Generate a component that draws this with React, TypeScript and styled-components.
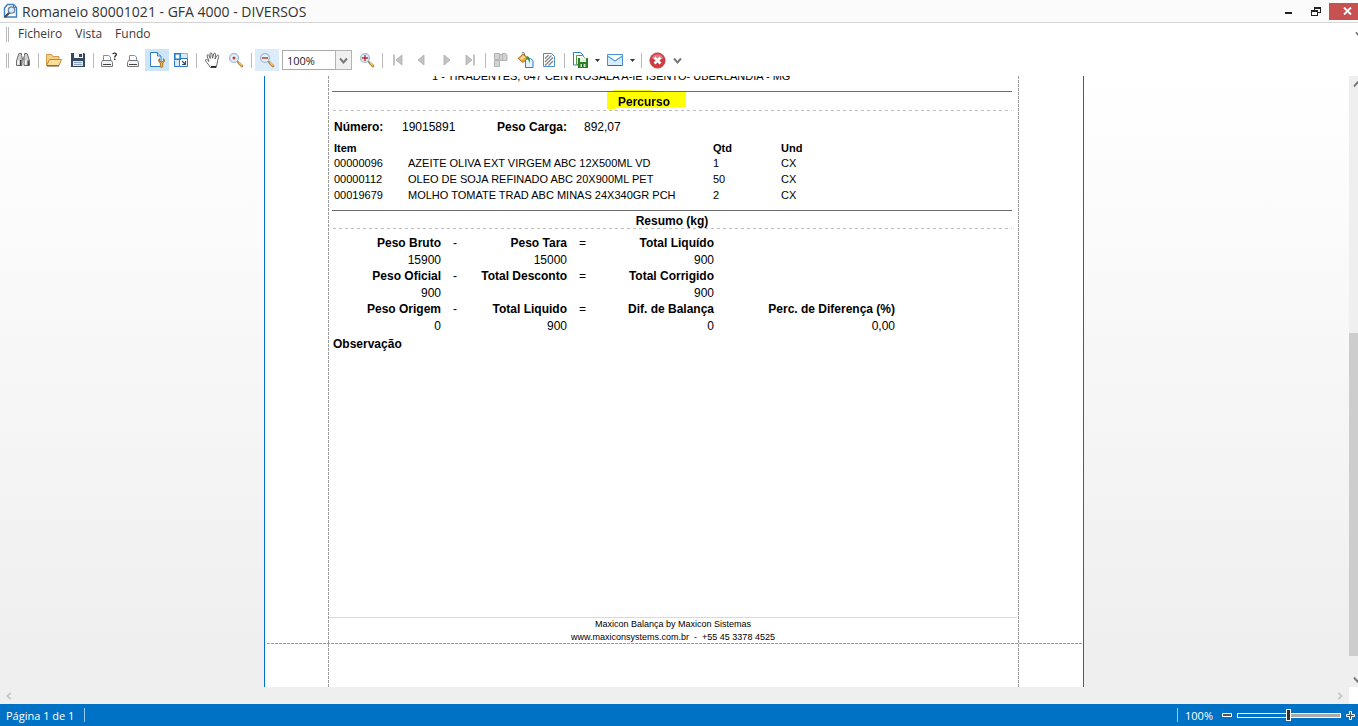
import React from "react";
import styled, { createGlobalStyle } from "styled-components";

const GlobalStyle = createGlobalStyle`
  * { box-sizing: border-box; }
  body { margin: 0; background: #fff; font-family: "Open Sans", "Noto Sans", sans-serif; color: #3b3b3b; }
  button { font: inherit; color: inherit; border: 0; padding: 0; margin: 0; background: none; }
  svg { display: block; flex: none; }
`;

const Window = styled.div`
  display: flex;
  flex-direction: column;
  height: 100vh;
  overflow: hidden;
`;

const TitleBar = styled.header`
  display: flex;
  align-items: center;
  height: 23px;
  flex: none;
  padding-left: 3px;
  background: #fbfbfb;
  border-bottom: 1px solid #d5d5d5;
`;

const Title = styled.h1`
  flex: 1;
  margin: 0 0 0 3px;
  padding-top: 2px;
  font-size: 14px;
  line-height: 20px;
  font-weight: 400;
  color: #333;
  white-space: nowrap;
`;

const WindowButton = styled.button<{ $close?: boolean }>`
  display: flex;
  align-items: center;
  justify-content: center;
  width: ${(p) => (p.$close ? 29 : 27)}px;
  height: 17px;
  padding-left: ${(p) => (p.$close ? 8 : 0)}px;
  background: ${(p) => (p.$close ? "#c75050" : "transparent")};
`;

const MenuBar = styled.nav`
  display: flex;
  align-items: center;
  height: 22px;
  flex: none;
  padding-left: 6px;
`;

const Grip = styled.span`
  width: 3px;
  height: 15px;
  flex: none;
  border: solid #b9b9b9;
  border-width: 0 1px;
`;

const MenuItem = styled.button`
  margin-left: 9px;
  margin-right: 4px;
  font-size: 12px;
  line-height: 20px;
`;

const MenuOverflow = styled.button`
  width: 3px;
  height: 10px;
  margin-left: auto;
  overflow: hidden;
`;

const ToolBar = styled.div`
  display: flex;
  align-items: center;
  height: 31px;
  flex: none;
  padding: 0 0 1px 6px;
`;

const ToolButton = styled.button<{ $active?: "strong" | "soft"; $first?: boolean }>`
  display: flex;
  align-items: center;
  justify-content: center;
  width: 24px;
  height: 22px;
  flex: none;
  margin-left: ${(p) => (p.$first ? 2 : 0)}px;
  background: ${(p) => (p.$active === "strong" ? "#cde6f7" : p.$active === "soft" ? "#dcecf9" : "none")};
`;

const DropButton = styled.button<{ $wide?: boolean }>`
  display: flex;
  align-items: center;
  justify-content: center;
  width: ${(p) => (p.$wide ? 17 : 11)}px;
  height: 22px;
`;

const Divider = styled.span`
  width: 1px;
  height: 15px;
  margin: 0 3px;
  flex: none;
  background: #b9b9b9;
`;

const ZoomBox = styled.div`
  position: relative;
  width: 70px;
  height: 20px;
  margin: 0 3px;
  flex: none;
`;

const ZoomSelect = styled.select`
  appearance: none;
  display: block;
  width: 100%;
  height: 100%;
  padding: 0 0 0 4px;
  border: 1px solid #a9a9a9;
  border-radius: 0;
  background: #fff;
  color: #222;
  font-family: inherit;
  font-size: 11px;
`;

const ZoomArrow = styled.span`
  position: absolute;
  inset: 0 0 0 auto;
  width: 17px;
  display: flex;
  align-items: center;
  justify-content: center;
  border: 1px solid #b4b4b4;
  background: #f0f0f0;
  pointer-events: none;
`;

const Workspace = styled.main`
  display: grid;
  grid-template-columns: 1fr 9px;
  grid-template-rows: 1fr 17px;
  flex: 1;
  min-height: 0;
  background: linear-gradient(#fff, #efefef 92%);
`;

const Viewport = styled.div`
  display: flex;
  justify-content: center;
  padding-right: 1px;
  min-width: 0;
  overflow: hidden;
`;

const VerticalScroll = styled.div`
  display: flex;
  flex-direction: column;
  align-items: flex-start;
  padding: 4px 0;
  overflow: hidden;
  background: #efefef;
`;

const ScrollSpace = styled.span<{ $grow: number; $thumb?: boolean }>`
  flex: ${(p) => p.$grow} 1 0;
  width: 100%;
  background: ${(p) => (p.$thumb ? "#cdcdcd" : "transparent")};
`;

const ScrollArrow = styled.button`
  height: 8px;
  flex: none;
  padding-left: 4px;
`;

const HorizontalScroll = styled.div`
  display: flex;
  align-items: center;
  justify-content: space-between;
  padding: 0 5px;
  background: #efefef;
`;

const Corner = styled.div`
  background: #fff;
`;

const dashX = "repeating-linear-gradient(90deg, #9c9c9c 0 3px, transparent 3px 4px)";
const dashY = "repeating-linear-gradient(#9c9c9c 0 3px, transparent 3px 4px)";

const Sheet = styled.article`
  display: flex;
  flex-direction: column;
  width: 820px;
  flex: none;
  border: solid #0072c6;
  border-width: 0 1px;
  background:
    ${dashY} 63px 0 / 1px 100% no-repeat,
    ${dashY} 753px 0 / 1px 100% no-repeat,
    #fff;
  font-family: "Liberation Sans", Arial, sans-serif;
  font-size: 12px;
  color: #000;
`;

const SheetBody = styled.div`
  display: flex;
  flex-direction: column;
  flex: 1;
  min-height: 0;
  margin: 0 64px;
`;

const SheetMargin = styled.div`
  height: 44px;
  flex: none;
  margin-left: 2px;
  background: ${dashX} 0 0 / 100% 1px no-repeat;
`;

const ClippedLine = styled.div`
  display: flex;
  align-items: flex-end;
  height: 7px;
  margin: 0 0 8px 103px;
  overflow: hidden;
  font-size: 11px;
  line-height: 14px;
  white-space: nowrap;
`;

const SectionHead = styled.h2<{ $tight?: boolean }>`
  position: relative;
  z-index: 0;
  margin: 0 7px 0 3px;
  height: ${(p) => (p.$tight ? 19 : 20)}px;
  border-top: 1px solid #6b6b6b;
  background: repeating-linear-gradient(90deg, #bdbdbd 0 3px, transparent 3px 6px) 1px 100% / 100% 1px no-repeat;
  font-size: 12px;
  line-height: 20px;
  font-weight: 700;
  text-align: center;
`;

const HeadText = styled.span<{ $shift?: number }>`
  position: relative;
  display: inline-block;
  margin-right: ${(p) => p.$shift ?? 0}px;
`;

const Marker = styled.svg`
  position: absolute;
  z-index: -1;
  left: -11px;
  top: -3px;
  mix-blend-mode: multiply;
`;

const Facts = styled.dl`
  display: grid;
  grid-template-columns: 68px 95px 87px auto;
  margin: 7px 0 5px 5px;
  line-height: 18px;
  dt { font-weight: 700; }
  dd { margin: 0; }
`;

const Items = styled.table`
  width: 600px;
  margin: 0 0 7px 5px;
  table-layout: fixed;
  border-collapse: collapse;
  font-size: 11px;
  line-height: 16px;
  th, td { padding: 0; text-align: left; white-space: nowrap; }
  th { line-height: 14px; }
`;

const Col = styled.col<{ $w?: number }>`
  width: ${(p) => (p.$w ? `${p.$w}px` : "auto")};
`;

const Summary = styled.div`
  display: grid;
  grid-template-columns: 112px 26px 100px 33px 114px 181px;
  margin: 6px 0 1px;
  text-align: right;
`;

const Label = styled.div`
  font-weight: 700;
  line-height: 17px;
  white-space: nowrap;
`;

const Value = styled.div`
  line-height: 16px;
  min-height: 16px;
`;

const Operator = styled.div`
  line-height: 17px;
  padding-left: 12px;
  text-align: left;
`;

const Observation = styled.h3`
  margin: 0 0 0 4px;
  font-size: 12px;
  line-height: 18px;
`;

const SheetFooter = styled.footer`
  margin: auto 2px -1px 0;
  border-top: 1px solid #dadada;
  font-size: 9px;
  line-height: 13px;
  text-align: center;
  p { margin: 0; }
`;

const StatusBar = styled.footer`
  display: flex;
  align-items: center;
  height: 22px;
  flex: none;
  padding: 0 3px 0 6px;
  background: #0072c6;
  color: #fff;
  font-size: 11px;
`;

const StatusText = styled.span`
  padding-top: 2px;
  line-height: 20px;
  white-space: nowrap;
`;

const StatusDivider = styled.span<{ $push?: boolean }>`
  width: 1px;
  height: 14px;
  margin-left: ${(p) => (p.$push ? "auto" : "10px")};
  margin-right: 7px;
  background: #9fc8e8;
`;

const ZoomControl = styled.div`
  display: flex;
  align-items: center;
  margin-left: 9px;
`;

const StatusButton = styled.button`
  display: flex;
  align-items: center;
`;

const ZoomRange = styled.input`
  appearance: none;
  width: 104px;
  height: 5px;
  margin: 0 5px;
  border: 1px solid #fff;
  background: linear-gradient(90deg, #0072c6 50%, #ababab 50%);
  &::-webkit-slider-thumb {
    appearance: none;
    width: 5px;
    height: 12px;
    border: 1px solid #fff;
    background: #333;
  }
`;

const Lens = ({ sign }: { sign: "plus" | "minus" | "dot" }) => (
  <svg width="16" height="16" viewBox="0 0 16 16">
    <path d="M9 9l1.600 1.600" stroke="#5f7fa4" strokeWidth="1.600" />
    <path d="M10.800 10.800l3.200 3.200" stroke="#b98436" strokeWidth="2.600" strokeLinecap="round" />
    <path d="M10.800 10.400l3.200 3.200" stroke="#f6cf7d" strokeWidth="1.200" />
    <circle cx="6" cy="6" r="4.400" fill="#e4f1fb" stroke="#a3bbd3" strokeWidth="1.400" />
    {sign === "dot" ? (
      <circle cx="6" cy="6" r="1.500" fill="#c23a3a" />
    ) : (
      <path d={sign === "plus" ? "M3 6h6M6 3v6" : "M3 6h6"} stroke="#b92d2d" strokeWidth="1.400" />
    )}
  </svg>
);

const AppIcon = () => (
  <svg width="16" height="16" viewBox="0 0 16 16">
    <path d="M4.500 1.500h6l3 3v9.500h-12v-9z" fill="#fff" stroke="#3b7fc0" strokeWidth="1.400" />
    <path d="M10.500 1.500v3h3" fill="none" stroke="#3b7fc0" />
    <path d="M6.500 9.500L2.500 13.500" stroke="#444a55" strokeWidth="2.200" strokeLinecap="round" />
    <circle cx="8.500" cy="7" r="3.200" fill="#d8ecfa" stroke="#6b8099" strokeWidth="1.300" />
  </svg>
);

const Binoculars = () => (
  <svg width="16" height="16" viewBox="0 0 16 16">
    <path d="M4 1.500h2.500v2l.5 1.500v8.500H1.500V9l1.500-5z" fill="#d0d0d0" stroke="#6d6d6d" />
    <path d="M9.500 1.500H12l1 2.500 1.500 5v4.500H9V5l.5-1.500z" fill="#d0d0d0" stroke="#6d6d6d" />
    <path d="M3.200 8.500v4M10.700 8.500v4" stroke="#fff" strokeWidth="1.500" />
    <path d="M5.700 8v5.500M13.200 8.500v5" stroke="#3a3a3a" strokeWidth="1.300" />
    <path d="M7 5.500h2v3H7z" fill="#8a8a8a" />
  </svg>
);

const Folder = () => (
  <svg width="16" height="16" viewBox="0 0 16 16">
    <path d="M.5 13.500V2.500h5l1.500 2h6v3" fill="#f7cf83" stroke="#cf9a48" />
    <path d="M3.500 7.500h12l-2.500 6H.5z" fill="#fbdc9a" stroke="#c38a35" />
    <path d="M1 14h12" stroke="#6e4a15" />
  </svg>
);

const Disk = () => (
  <svg width="16" height="16" viewBox="0 0 16 16">
    <path d="M1 1h13l1 1v13H1z" fill="#33475f" />
    <path d="M4 1h9v5H4z" fill="#f2f6fa" />
    <path d="M9 2h3v3H9z" fill="#33475f" />
    <path d="M3 9h10v5H3z" fill="#dbe6f1" />
    <path d="M4 10.500h8M4 12.500h8" stroke="#8fa5bd" />
  </svg>
);

const Printer = ({ ask }: { ask?: boolean }) => (
  <svg width={ask ? 18 : 14} height="16" viewBox={ask ? "0 0 18 16" : "0 0 14 16"}>
    <path d="M3.500 8V3.500h5l2 1.500v3" fill="#fff" stroke="#6d94be" />
    <path d="M2.500 8.500h9l1 2v4h-11v-4z" fill="#f3f3f3" stroke="#777" />
    <path d="M3 12.500h8" stroke="#444" />
    {ask && (
      <g fill="none" stroke="#333" strokeWidth="1.400">
        <path d="M12.800 2.200c.3-1.500 3.700-1.500 3.500.3 0 1.300-1.600 1.300-1.600 2.900" />
        <path d="M14.700 6.500v1.400" />
      </g>
    )}
  </svg>
);

const PageSetup = () => (
  <svg width="17" height="16" viewBox="0 0 17 16">
    <path d="M1.500.5h7l3.500 3.500v10.500H1.500z" fill="#fff" stroke="#2f7cc4" />
    <path d="M8.500.5V4H12" fill="#cfe4f7" stroke="#2f7cc4" />
    <path
      d="M10.500 6.500c-1.500 1.200-1.300 3.500.8 4.500v3.500c0 1.200 2.400 1.200 2.400 0V11c2.100-1 2.300-3.300.8-4.500v2.700l-2 .8-2-.8z"
      fill="#f5b23c"
      stroke="#a85f12"
      strokeWidth=".8"
    />
  </svg>
);

const ScalePage = () => (
  <svg width="16" height="16" viewBox="0 0 16 16">
    <path d="M1.500 1.500h13v13h-13z" fill="#d9ebf9" stroke="#7db6e3" />
    <path d="M6.500 6.500h8v8h-8z" fill="#fff" stroke="#2f7cc4" />
    <path d="M1.500 9v5.500H6" fill="none" stroke="#2f7cc4" />
    <path d="M1.800 1.800h5.400v5.400H1.800z" fill="#fff" stroke="#1f7fd0" strokeWidth="1.600" />
    <path d="M9 9l3 3M12.500 9v3.500H9" fill="none" stroke="#33506e" strokeWidth="1.200" />
  </svg>
);

const Hand = () => (
  <svg width="16" height="16" viewBox="0 0 16 16">
    <path
      d="M5.500 15.500C4.500 13 2 11 .7 8.800c-.5-1.300 1-1.800 1.900-.8l1.600 1.500L2.300 4c-.4-1.400 1.300-1.900 1.800-.6L5.500 6.500 5.200 2c0-1.500 1.800-1.600 2 0l.5 4.200L8.800 2c.4-1.300 2.100-1 1.900.4L10.200 7l1.900-3.400c.7-1.200 2.200-.4 1.700.9-1 2.600-.8 5-1.600 7.500l-.8 3.500z"
      transform="translate(.8 0)"
      fill="#fff"
      stroke="#555"
      strokeWidth=".9"
    />
    <path d="M7 14.700h5" stroke="#222" strokeWidth="1.500" />
  </svg>
);

const Step = ({ back, end }: { back?: boolean; end?: boolean }) => (
  <svg width="12" height="12" viewBox="0 0 12 12">
    <g transform={back ? "matrix(-1 0 0 1 12 0)" : undefined}>
      <path d={end ? "M2 1v10l6-5z" : "M4 1v10l6-5z"} fill="#c4c4c4" stroke="#a9a9a9" strokeWidth=".8" />
      {end && <path d="M10 .5v11" stroke="#a9a9a9" strokeWidth="1.400" />}
    </g>
  </svg>
);

const MultiPage = () => (
  <svg width="16" height="16" viewBox="0 0 16 16" fill="#d2d2d2" stroke="#b4b4b4">
    <path d="M1.500 1.500h5v6h-5zM6.500 2.500h5v6h-5zM1.500 8.500h5v6h-5z" />
    <path d="M9.500 1.500h3l1.500 1.500v5.500H9.500z" />
  </svg>
);

const FillColor = () => (
  <svg width="17" height="16" viewBox="0 0 17 16">
    <path d="M8.500 6.500h5l2.500 2v7H8.500z" fill="#e8f4fd" stroke="#2f7cc4" />
    <path d="M5 1.500c0-1.500 2.500-1.500 2.500 0V5" fill="none" stroke="#6e6e6e" />
    <path d="M1 6.500L6 2l5 4L6 10.500z" fill="#f3a63a" stroke="#9a5a12" strokeWidth=".8" />
    <path d="M3 6.500l3.500-2.700 2 1.400L4.500 8z" fill="#ffe0a3" />
    <path d="M10 4c3 1 3.500 4 2.800 7.500-.6-2.500-1.600-4-4-5z" fill="#3a9b35" />
  </svg>
);

const Watermark = () => (
  <svg width="16" height="16" viewBox="0 0 16 16">
    <path d="M2.500 1.500h8l3 3v10h-11z" fill="#fff" stroke="#4a90cc" />
    <path d="M4 6.500L7.500 3M4 10l6.500-6.500M4 13.500L12 5.500M7.500 13.500L12 9" stroke="#858585" strokeWidth="1.300" />
  </svg>
);

const ExportIcon = () => (
  <svg width="17" height="16" viewBox="0 0 17 16">
    <path d="M1.500.5h7l2.500 2.500v10H1.500z" fill="#fff" stroke="#2f7cc4" />
    <path d="M4.500 3.500h6l2 2v7h-8z" fill="#fff" stroke="#4fa043" />
    <path d="M6 6h10v10H6z" fill="#2f7d2c" />
    <path d="M8 6h6v4H8z" fill="#e4f5d9" />
    <path d="M8.500 12h5v3h-5z" fill="#cfe9c4" />
    <path d="M10 12h1.500v3H10z" fill="#205e20" />
  </svg>
);

const MailIcon = () => (
  <svg width="16" height="12" viewBox="0 0 16 12">
    <path d="M.5.5h15v11H.5z" fill="#d7edfb" stroke="#4a90cc" />
    <path d="M1 1h14L8 6.500z" fill="#fff" />
    <path d="M.5 2L8 7l7.500-5" fill="none" stroke="#5aa2da" strokeWidth="1.200" />
    <path d="M1 11.500h14" stroke="#2a6cae" />
  </svg>
);

const StopIcon = () => (
  <svg width="17" height="17" viewBox="0 0 17 17">
    <circle cx="8.500" cy="8.500" r="7.600" fill="#d13a3f" stroke="#b5474b" />
    <path d="M2.800 6.500a6 6 0 0 1 11.400 0 14 14 0 0 1-11.400 0z" fill="#e07a7e" />
    <path d="M5.500 5.500l6 6M11.500 5.500l-6 6" stroke="#fff" strokeWidth="2.600" />
  </svg>
);

const Caret = () => (
  <svg width="5" height="3" viewBox="0 0 5 3">
    <path d="M0 0h5L2.500 3z" fill="#333" />
  </svg>
);

const Chevron = ({ turn = 0, color = "#777", size = 9 }: { turn?: number; color?: string; size?: number }) => (
  <svg width={size} height={size} viewBox="0 0 9 9">
    <path d="M1 2.500L4.500 6.500 8 2.500" transform={`rotate(${turn} 4.5 4.5)`} fill="none" stroke={color} strokeWidth="1.900" />
  </svg>
);

const items = [
  ["00000096", "AZEITE OLIVA EXT VIRGEM ABC 12X500ML VD", "1", "CX"],
  ["00000112", "OLEO DE SOJA REFINADO ABC 20X900ML PET", "50", "CX"],
  ["00019679", "MOLHO TOMATE TRAD ABC MINAS 24X340GR PCH", "2", "CX"],
];

const summary = [
  { labels: ["Peso Bruto", "Peso Tara", "Total Liquído", ""], values: ["15900", "15000", "900", ""] },
  { labels: ["Peso Oficial", "Total Desconto", "Total Corrigido", ""], values: ["900", "", "900", ""] },
  { labels: ["Peso Origem", "Total Liquido", "Dif. de Balança", "Perc. de Diferença (%)"], values: ["0", "900", "0", "0,00"] },
];

const operators = ["-", "="];

const Report = () => (
  <Sheet>
    <SheetBody>
      <ClippedLine>1 - TIRADENTES, 647 CENTROSALA A-IE ISENTO- UBERLANDIA - MG</ClippedLine>
      <SectionHead>
        <HeadText $shift={56}>
          <Marker width="79" height="21" viewBox="0 0 79 21">
            <path d="M0 3h6V1h39v1h12v1h22v15l-24 1H8v1H0z" fill="#ffff00" />
          </Marker>
          Percurso
        </HeadText>
      </SectionHead>
      <Facts>
        <dt>Número:</dt>
        <dd>19015891</dd>
        <dt>Peso Carga:</dt>
        <dd>892,07</dd>
      </Facts>
      <Items>
        <colgroup>
          <Col $w={74} />
          <Col $w={305} />
          <Col $w={68} />
          <Col />
        </colgroup>
        <thead>
          <tr>
            <th colSpan={2}>Item</th>
            <th>Qtd</th>
            <th>Und</th>
          </tr>
        </thead>
        <tbody>
          {items.map((row) => (
            <tr key={row[0]}>
              {row.map((cell) => (
                <td key={cell}>{cell}</td>
              ))}
            </tr>
          ))}
        </tbody>
      </Items>
      <SectionHead $tight>
        <HeadText>Resumo (kg)</HeadText>
      </SectionHead>
      <Summary>
        {summary.map((group) => (
          <React.Fragment key={group.labels[0]}>
            {group.labels.map((label, i) => (
              <React.Fragment key={i}>
                <Label>{label}</Label>
                {operators[i] && <Operator>{operators[i]}</Operator>}
              </React.Fragment>
            ))}
            {group.values.map((value, i) => (
              <React.Fragment key={i}>
                <Value>{value}</Value>
                {operators[i] && <span />}
              </React.Fragment>
            ))}
          </React.Fragment>
        ))}
      </Summary>
      <Observation>Observação</Observation>
      <SheetFooter>
        <p>Maxicon Balança by Maxicon Sistemas</p>
        <p>www.maxiconsystems.com.br&nbsp; -&nbsp; +55 45 3378 4525</p>
      </SheetFooter>
    </SheetBody>
    <SheetMargin />
  </Sheet>
);

export default function App() {
  return (
    <Window>
      <GlobalStyle />
      <TitleBar>
        <AppIcon />
        <Title>Romaneio 80001021 - GFA 4000 - DIVERSOS</Title>
        <WindowButton aria-label="Minimizar">
          <svg width="7" height="6" viewBox="0 0 7 6"><path d="M0 4h7v2H0z" fill="#222" /></svg>
        </WindowButton>
        <WindowButton aria-label="Restaurar">
          <svg width="10" height="9" viewBox="0 0 10 9">
            <path d="M3 3V0h7v6H7V5h2V2H4v1z" fill="#222" />
            <path d="M0 3h7v6H0zM1 5v3h5V5z" fill="#222" fillRule="evenodd" />
          </svg>
        </WindowButton>
        <WindowButton $close aria-label="Fechar">
          <svg width="9" height="8" viewBox="0 0 9 8"><path d="M1 .5l7 7M8 .5l-7 7" stroke="#fff" strokeWidth="1.900" /></svg>
        </WindowButton>
      </TitleBar>
      <MenuBar>
        <Grip />
        <MenuItem>Ficheiro</MenuItem>
        <MenuItem>Vista</MenuItem>
        <MenuItem>Fundo</MenuItem>
        <MenuOverflow aria-label="Mais opções"><Chevron size={8} /></MenuOverflow>
      </MenuBar>
      <ToolBar>
        <Grip />
        <ToolButton $first aria-label="Procurar"><Binoculars /></ToolButton>
        <Divider />
        <ToolButton aria-label="Abrir"><Folder /></ToolButton>
        <ToolButton aria-label="Guardar"><Disk /></ToolButton>
        <Divider />
        <ToolButton aria-label="Imprimir com opções"><Printer ask /></ToolButton>
        <ToolButton aria-label="Imprimir"><Printer /></ToolButton>
        <ToolButton $active="strong" aria-label="Configurar página"><PageSetup /></ToolButton>
        <ToolButton aria-label="Escala"><ScalePage /></ToolButton>
        <Divider />
        <ToolButton aria-label="Mão"><Hand /></ToolButton>
        <ToolButton aria-label="Lupa"><Lens sign="dot" /></ToolButton>
        <Divider />
        <ToolButton $active="soft" aria-label="Reduzir"><Lens sign="minus" /></ToolButton>
        <ZoomBox>
          <ZoomSelect aria-label="Zoom" defaultValue="100%">
            <option>100%</option>
          </ZoomSelect>
          <ZoomArrow><Chevron /></ZoomArrow>
        </ZoomBox>
        <ToolButton aria-label="Ampliar"><Lens sign="plus" /></ToolButton>
        <Divider />
        <ToolButton aria-label="Primeira página"><Step back end /></ToolButton>
        <ToolButton aria-label="Página anterior"><Step back /></ToolButton>
        <ToolButton aria-label="Página seguinte"><Step /></ToolButton>
        <ToolButton aria-label="Última página"><Step end /></ToolButton>
        <Divider />
        <ToolButton aria-label="Várias páginas"><MultiPage /></ToolButton>
        <ToolButton aria-label="Cor de fundo"><FillColor /></ToolButton>
        <ToolButton aria-label="Marca de água"><Watermark /></ToolButton>
        <Divider />
        <ToolButton aria-label="Exportar"><ExportIcon /></ToolButton>
        <DropButton aria-label="Formatos"><Caret /></DropButton>
        <ToolButton aria-label="Enviar por correio"><MailIcon /></ToolButton>
        <DropButton aria-label="Formatos de envio"><Caret /></DropButton>
        <Divider />
        <ToolButton aria-label="Sair"><StopIcon /></ToolButton>
        <DropButton $wide aria-label="Mais botões"><Chevron /></DropButton>
      </ToolBar>
      <Workspace>
        <Viewport><Report /></Viewport>
        <VerticalScroll>
          <ScrollArrow aria-label="Subir"><Chevron turn={180} /></ScrollArrow>
          <ScrollSpace $grow={245} />
          <ScrollSpace $grow={323} $thumb />
          <ScrollSpace $grow={19} />
          <ScrollArrow aria-label="Descer"><Chevron /></ScrollArrow>
        </VerticalScroll>
        <HorizontalScroll>
          <Chevron turn={90} color="#c6c6c6" size={8} />
          <Chevron turn={-90} color="#c6c6c6" size={8} />
        </HorizontalScroll>
        <Corner />
      </Workspace>
      <StatusBar>
        <StatusText>Página 1 de 1</StatusText>
        <StatusDivider />
        <StatusDivider $push />
        <StatusText>100%</StatusText>
        <ZoomControl>
          <StatusButton aria-label="Menos zoom">
            <svg width="10" height="4" viewBox="0 0 10 4"><path d="M.5.5h9v3h-9z" fill="#555" stroke="#fff" /></svg>
          </StatusButton>
          <ZoomRange type="range" aria-label="Nível de zoom" defaultValue={49} />
          <StatusButton aria-label="Mais zoom">
            <svg width="9" height="9" viewBox="0 0 9 9">
              <path d="M3.500.5h2v3h3v2h-3v3h-2v-3h-3v-2h3z" fill="#555" stroke="#fff" />
            </svg>
          </StatusButton>
        </ZoomControl>
      </StatusBar>
    </Window>
  );
}
